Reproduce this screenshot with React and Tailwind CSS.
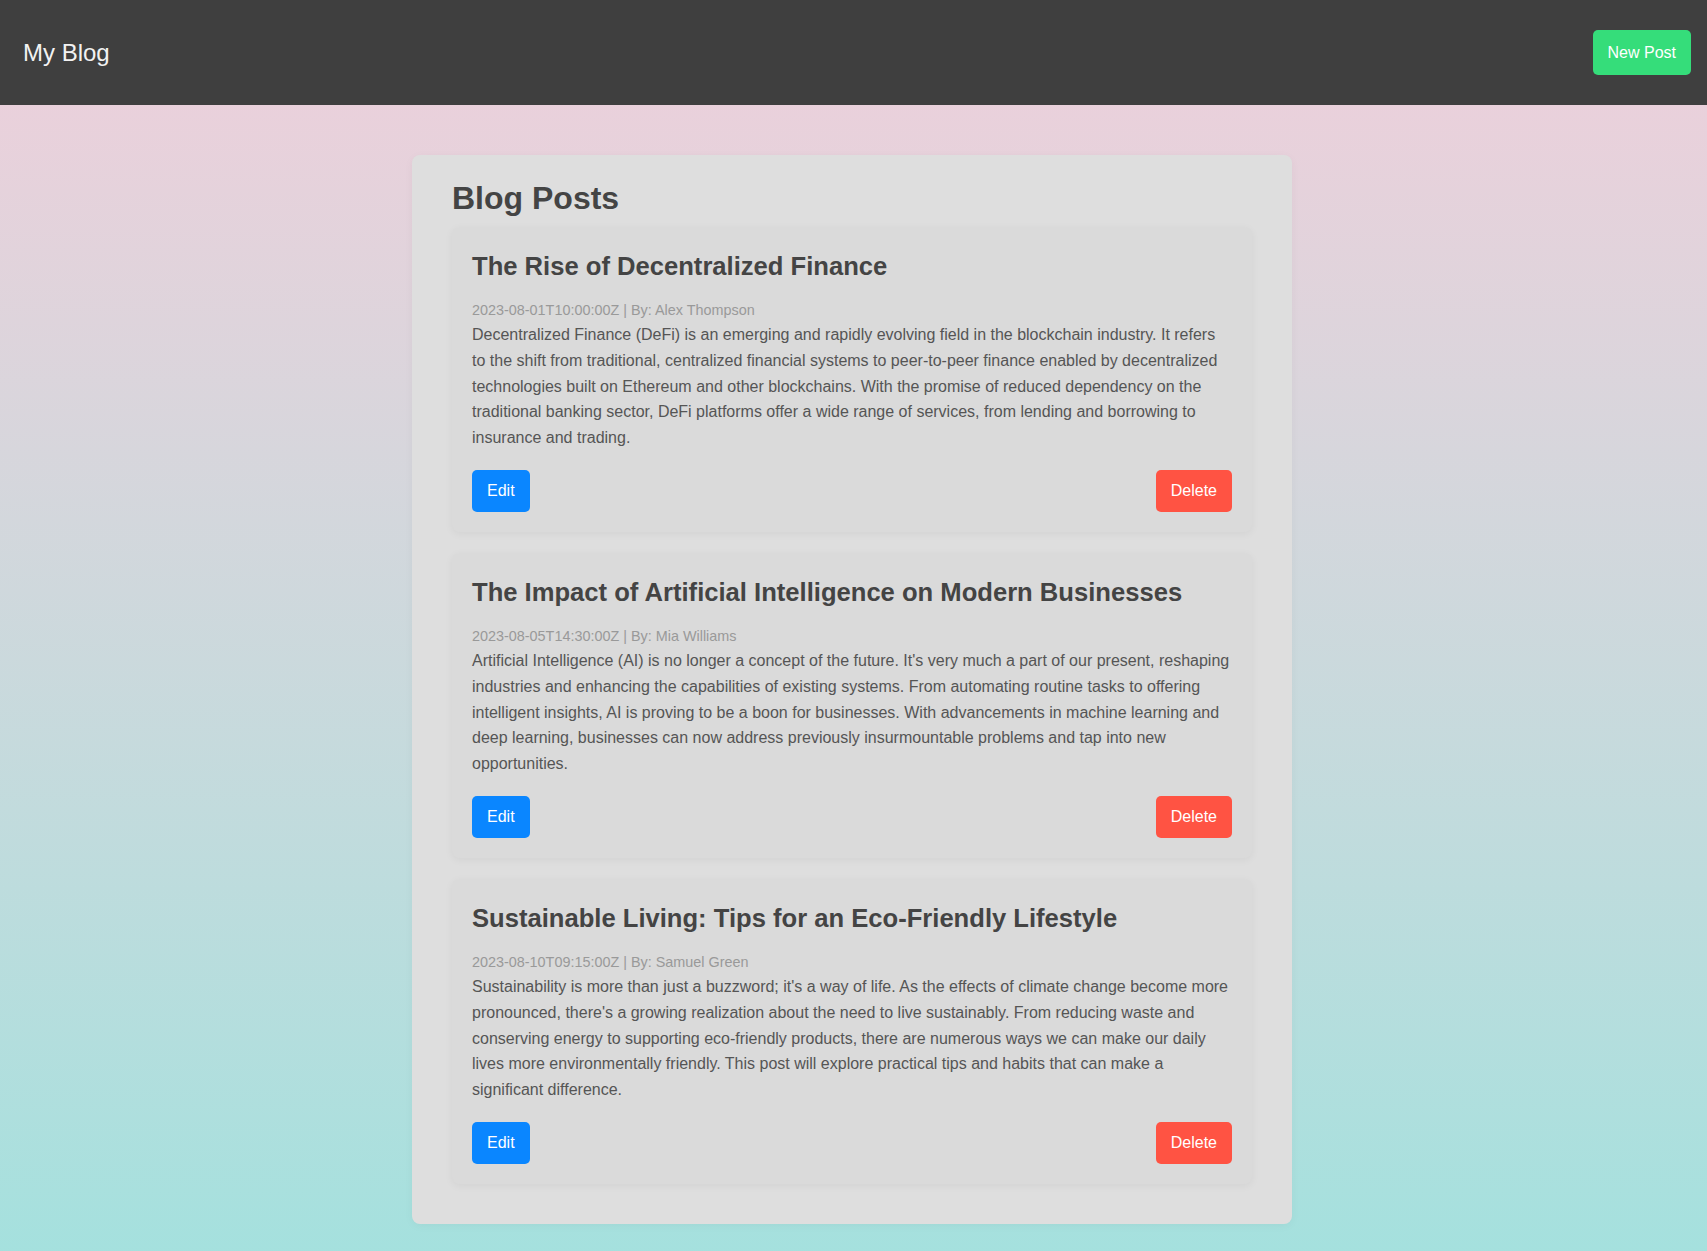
import React, { useState } from "react";

const initialPosts = [
  {
    id: 1,
    title: "The Rise of Decentralized Finance",
    date: "2023-08-01T10:00:00Z",
    author: "Alex Thompson",
    content:
      "Decentralized Finance (DeFi) is an emerging and rapidly evolving field in the blockchain industry. It refers to the shift from traditional, centralized financial systems to peer-to-peer finance enabled by decentralized technologies built on Ethereum and other blockchains. With the promise of reduced dependency on the traditional banking sector, DeFi platforms offer a wide range of services, from lending and borrowing to insurance and trading.",
  },
  {
    id: 2,
    title: "The Impact of Artificial Intelligence on Modern Businesses",
    date: "2023-08-05T14:30:00Z",
    author: "Mia Williams",
    content:
      "Artificial Intelligence (AI) is no longer a concept of the future. It's very much a part of our present, reshaping industries and enhancing the capabilities of existing systems. From automating routine tasks to offering intelligent insights, AI is proving to be a boon for businesses. With advancements in machine learning and deep learning, businesses can now address previously insurmountable problems and tap into new opportunities.",
  },
  {
    id: 3,
    title: "Sustainable Living: Tips for an Eco-Friendly Lifestyle",
    date: "2023-08-10T09:15:00Z",
    author: "Samuel Green",
    content:
      "Sustainability is more than just a buzzword; it's a way of life. As the effects of climate change become more pronounced, there's a growing realization about the need to live sustainably. From reducing waste and conserving energy to supporting eco-friendly products, there are numerous ways we can make our daily lives more environmentally friendly. This post will explore practical tips and habits that can make a significant difference.",
  },
];

function PostCard({ post, onDelete }) {
  return (
    <div className="bg-[#dadada] rounded-lg px-5 pt-5 pb-5 shadow-[0_2px_8px_rgba(0,0,0,0.05)]">
      <h3 className="text-[25.6px] font-bold leading-normal text-[#444] mb-[14px]">{post.title}</h3>
      <p className="text-[14.4px] leading-[1.6] text-[#999]">
        {post.date} | By: {post.author}
      </p>
      <p className="text-base leading-[1.6] text-[#555]">{post.content}</p>
      <div className="flex justify-between mt-5">
        <button className="bg-[#0a86ff] text-white text-base leading-[1.6] px-[15px] py-2 rounded-[5px]">
          Edit
        </button>
        <button
          className="bg-[#ff5343] text-white text-base leading-[1.6] px-[15px] py-2 rounded-[5px]"
          onClick={() => onDelete(post.id)}
        >
          Delete
        </button>
      </div>
    </div>
  );
}

export default function App() {
  const [posts, setPosts] = useState(initialPosts);

  return (
    <div
      className="min-h-screen bg-gradient-to-b from-[#efcfdb] to-[#a3e1de]"
      style={{ fontFamily: '"Liberation Sans", Arial, sans-serif' }}
    >
      {/* header */}
      <header className="h-[105px] bg-[#3f3f3f] flex items-center justify-between pl-[23px] pr-4">
        <h1 className="text-2xl text-[#f2f2f2]">My Blog</h1>
        <button className="bg-[#35dd7a] text-white text-base leading-[1.6] px-[15px] py-[10px] rounded-[5px]">
          New Post
        </button>
      </header>

      {/* posts */}
      <main className="flex justify-center pt-[50px] pb-[50px] pr-[3px]">
        <div className="w-[880px] bg-[#dedede] rounded-lg pt-[25px] px-10 pb-10 shadow-[0_2px_10px_rgba(0,0,0,0.04)]">
          <h2 className="text-[32px] font-bold leading-[37px] text-[#444] mb-[10px]">Blog Posts</h2>
          <div className="flex flex-col gap-[21px]">
            {posts.map((post) => (
              <PostCard key={post.id} post={post} onDelete={(id) => setPosts((p) => p.filter((x) => x.id !== id))} />
            ))}
          </div>
        </div>
      </main>
    </div>
  );
}
